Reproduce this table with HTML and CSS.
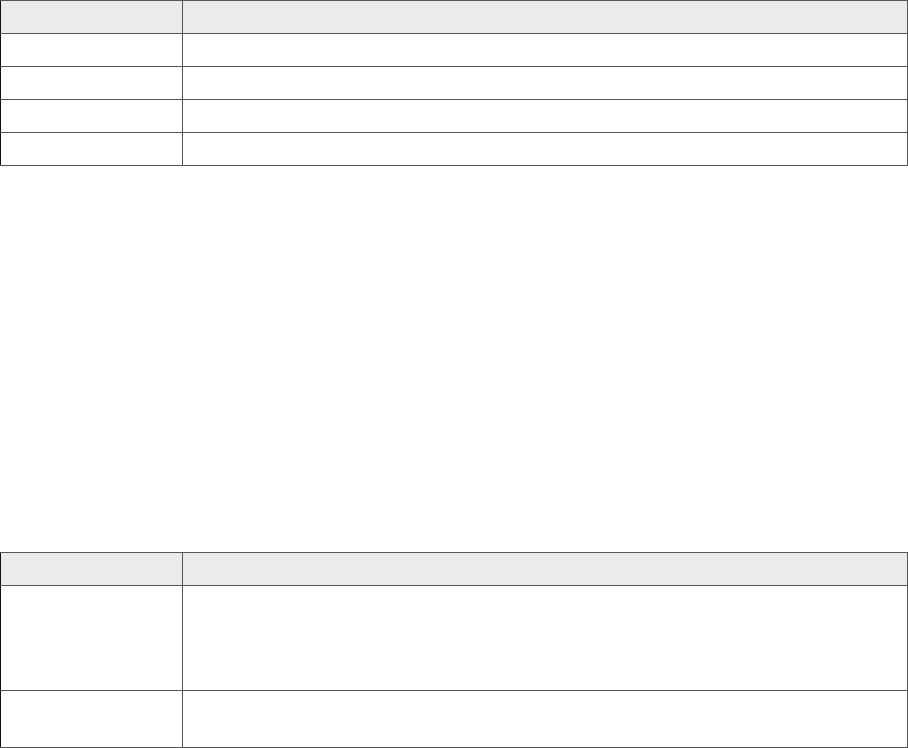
FILE: index.html
```html
<!DOCTYPE html>
<html>
<head>
<meta charset="utf-8">
<link rel="stylesheet" href="styles.css">
</head>
<body>
<table class="grid grid-top">
  <thead>
    <tr><th class="c1"></th><th></th></tr>
  </thead>
  <tbody>
    <tr><td></td><td></td></tr>
    <tr><td></td><td></td></tr>
    <tr><td></td><td></td></tr>
    <tr><td></td><td></td></tr>
  </tbody>
</table>
<table class="grid grid-bottom">
  <thead>
    <tr><th class="c1"></th><th></th></tr>
  </thead>
  <tbody>
    <tr class="tall"><td></td><td></td></tr>
    <tr class="mid"><td></td><td></td></tr>
  </tbody>
</table>
</body>
</html>
```

FILE: styles.css
```css
html, body {
  margin: 0;
  padding: 0;
  background: #ffffff;
  font-family: "Liberation Sans", Arial, sans-serif;
}
.grid {
  width: 908px;
  border-collapse: collapse;
  table-layout: fixed;
}
.grid th, .grid td {
  border: 1px solid #555555;
  padding: 0;
  height: 32px;
}
.grid th {
  background: #ebebeb;
}
.grid th:first-child, .grid td:first-child {
  border-left-color: #111111;
}
.grid .c1 {
  width: 181px;
}
.grid-bottom {
  margin-top: 386px;
}
.grid-bottom .tall td {
  height: 104px;
}
.grid-bottom .mid td {
  height: 56px;
}
```
